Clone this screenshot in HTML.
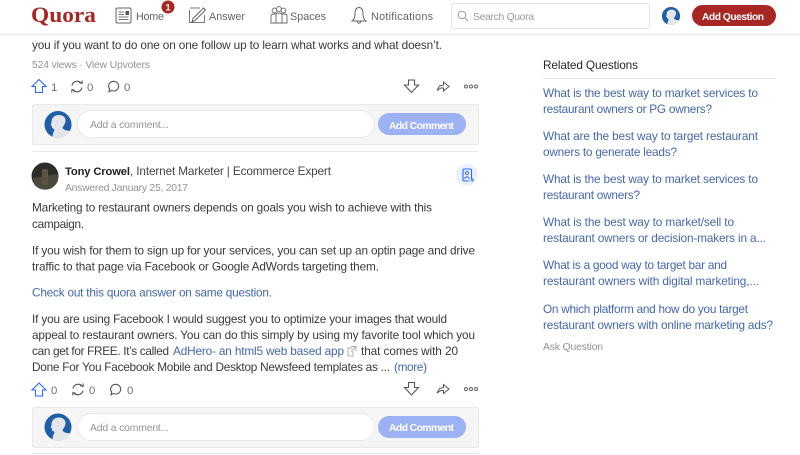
<!DOCTYPE html>
<html><head><meta charset="utf-8"><title>Quora</title>
<style>
html,body{margin:0;padding:0;background:#fff;width:800px;height:455px;overflow:hidden}
svg{display:block}
text{font-family:"Liberation Sans",sans-serif;font-size:11.8px;fill:#3a3a3a}
.l{fill:#4468ac}
.g{fill:#939393;font-size:10.4px}
.n{fill:#636466;font-size:10.8px}
.s{fill:#707070;font-size:11.4px}
</style></head><body>
<svg width="800" height="455" viewBox="0 0 800 455" xmlns="http://www.w3.org/2000/svg">
<defs>
<g id="av"><circle cx="0" cy="0" r="13.5" fill="#1f5ea8"/><path d="M-5.500 13 C-5.500 9 -4 7 -3.500 5 C-4.500 4 -6.500 4 -6 1.500 L-7.500 0.500 L-6.500 -1.500 C-7 -6 -4 -9.500 1 -9.500 C5.500 -9.500 8 -6.500 7.500 -3 C7 0 5 1.500 4.500 3.500 C5.500 5.500 9 6 12 6.500 C10 11 5 13.500 0 13.500 Z" fill="#e4e6ea"/></g>
<g id="re" fill="none" stroke="#555" stroke-width="1.100"><path d="M-5 -1 A5.200 5.200 0 0 1 4 -3.500 M5 1 A5.200 5.200 0 0 1 -4 3.500"/><path d="M2 -4 L5 -3 L5.300 -6 M-2 4 L-5 3 L-5.300 6"/></g>
<g id="co" fill="none" stroke="#555" stroke-width="1.100"><path d="M-2.500 4 A5 4.800 0 1 0 -4.300 2.600 L-5 5.200 Z"/></g>
<g id="dn" fill="none" stroke="#555" stroke-width="1.100"><path d="M-3 -6 L3 -6 L3 -1 L7 -1 L0 6.500 L-7 -1 L-3 -1 Z"/></g>
<g id="sh" fill="none" stroke="#555" stroke-width="1"><path d="M-6 4 L-3.500 -0.500 L0.500 -1.500 L0.500 -4.500 L6 0 L0.500 4.500 L0.500 1.500 L-2 1.500 Z"/></g>
<g id="mo" fill="none" stroke="#666" stroke-width="1"><circle cx="-5" cy="0" r="1.500"/><circle cx="0" cy="0" r="1.500"/><circle cx="5" cy="0" r="1.500"/></g>
<g id="box">
<rect x="0.500" y="0.500" width="446" height="40" rx="2" fill="#f5f5f5" stroke="#e8e8e8"/>
<rect x="45.500" y="6.500" width="297" height="27" rx="13.500" fill="#fff" stroke="#e8e8e8"/>
<rect x="346" y="9" width="88" height="22" rx="11" fill="#9db2f5"/>
</g>
</defs>

<!-- top fragment -->
<text x="32" y="49" textLength="410" lengthAdjust="spacing">you if you want to do one on one follow up to learn what works and what doesn’t.</text>
<text class="g" x="32" y="68" textLength="118" lengthAdjust="spacing">524 views · View Upvoters</text>

<!-- action row 1 -->
<path d="M39 79.500 L46 86.500 L42.500 86.500 L42.500 92.500 L35.500 92.500 L35.500 86.500 L32 86.500 Z" fill="none" stroke="#2e69ff" stroke-width="1.100"/>
<text class="s" x="51" y="91">1</text>
<use href="#re" x="77" y="86.500"/>
<text class="s" x="87" y="91">0</text>
<use href="#co" x="114" y="86.500"/>
<text class="s" x="124" y="91">0</text>
<use href="#dn" x="411.500" y="86"/>
<use href="#sh" x="443" y="86.500"/>
<use href="#mo" x="471" y="86.500"/>

<!-- comment box 1 -->
<use href="#box" x="32" y="104"/>
<use href="#av" x="58" y="124.500"/>
<text class="g" x="90" y="128" textLength="79" lengthAdjust="spacing">Add a comment...</text>
<text x="389" y="129" textLength="65" lengthAdjust="spacing" style="fill:#fff;font-weight:bold;font-size:10.400px">Add Comment</text>
<rect x="32" y="151" width="446" height="1" fill="#e8e8e8"/>

<!-- author -->
<circle cx="45" cy="176" r="13.500" fill="#2b2d28"/>
<path d="M33 178 L58 174 L58 180 A13.500 13.500 0 0 1 34 184 Z" fill="#4a4a3a"/>
<rect x="42" y="169" width="6" height="16" rx="2" fill="#5f5140"/>
<text x="65" y="175" textLength="65" lengthAdjust="spacing" style="font-weight:bold;fill:#222;font-size:11.200px">Tony Crowel</text>
<text x="130" y="175" textLength="201" lengthAdjust="spacing" style="fill:#444">, Internet Marketer | Ecommerce Expert</text>
<text class="g" x="65" y="191" textLength="123" lengthAdjust="spacing">Answered January 25, 2017</text>
<circle cx="467" cy="175" r="11" fill="#ebf0fe"/>
<path d="M471.500 179 V170.500 Q471.500 169 470 169 L464.500 169 Q463 169 463 170.500 L463 179.500 Q463 181 464.500 181 L469 181" fill="none" stroke="#2e69ff" stroke-width="1.100"/>
<circle cx="467" cy="173" r="1.600" fill="none" stroke="#2e69ff"/>
<path d="M464.500 179 Q467 174.500 469.500 179 M470.500 180 H474 M472.200 178.200 V181.700" fill="none" stroke="#2e69ff"/>

<!-- body -->
<text x="32" y="211.500" textLength="400" lengthAdjust="spacing">Marketing to restaurant owners depends on goals you wish to achieve with this</text>
<text x="32" y="228" textLength="52" lengthAdjust="spacing">campaign.</text>
<text x="32" y="254.500" textLength="443" lengthAdjust="spacing">If you wish for them to sign up for your services, you can set up an optin page and drive</text>
<text x="32" y="270.500" textLength="347" lengthAdjust="spacing">traffic to that page via Facebook or Google AdWords targeting them.</text>
<text class="l" x="32" y="296.500" textLength="240" lengthAdjust="spacing">Check out this quora answer on same question.</text>
<text x="32" y="323" textLength="415" lengthAdjust="spacing">If you are using Facebook I would suggest you to optimize your images that would</text>
<text x="32" y="339" textLength="443" lengthAdjust="spacing">appeal to restaurant owners. You can do this simply by using my favorite tool which you</text>
<text x="32" y="355" textLength="137" lengthAdjust="spacing">can get for FREE. It’s called</text>
<text class="l" x="173" y="355" textLength="171" lengthAdjust="spacing">AdHero- an html5 web based app</text>
<path d="M353 351 V356 H348 V348 H352 M351 346.500 H356 V351 M356 346.500 L351 351.500" fill="none" stroke="#999" stroke-width=".8"/>
<text x="361" y="355" textLength="97" lengthAdjust="spacing">that comes with 20</text>
<text x="32" y="371" textLength="358" lengthAdjust="spacing">Done For You Facebook Mobile and Desktop Newsfeed templates as ...</text>
<text class="l" x="394" y="371" textLength="33" lengthAdjust="spacing">(more)</text>

<!-- action row 2 -->
<path d="M39 383 L46 390 L42.500 390 L42.500 396 L35.500 396 L35.500 390 L32 390 Z" fill="none" stroke="#2e69ff" stroke-width="1.100"/>
<text class="s" x="51" y="394">0</text>
<use href="#re" x="78" y="389.500"/>
<text class="s" x="89" y="394">0</text>
<use href="#co" x="116" y="389.500"/>
<text class="s" x="127" y="394">0</text>
<use href="#dn" x="411.500" y="388.500"/>
<use href="#sh" x="443" y="389"/>
<use href="#mo" x="471" y="389"/>

<!-- comment box 2 -->
<use href="#box" x="32" y="407"/>
<use href="#av" x="58" y="427"/>
<text class="g" x="90" y="431" textLength="79" lengthAdjust="spacing">Add a comment...</text>
<text x="389" y="431" textLength="65" lengthAdjust="spacing" style="fill:#fff;font-weight:bold;font-size:10.400px">Add Comment</text>
<rect x="32" y="453" width="446" height="1" fill="#e8e8e8"/>

<!-- sidebar -->
<text x="543" y="69" textLength="95" lengthAdjust="spacing" style="fill:#282829">Related Questions</text>
<rect x="543" y="78" width="233" height="1" fill="#e6e6e6"/>
<text class="l" x="543" y="97" textLength="215" lengthAdjust="spacing">What is the best way to market services to</text>
<text class="l" x="543" y="113" textLength="169" lengthAdjust="spacing">restaurant owners or PG owners?</text>
<text class="l" x="543" y="140" textLength="215" lengthAdjust="spacing">What are the best way to target restaurant</text>
<text class="l" x="543" y="156" textLength="134" lengthAdjust="spacing">owners to generate leads?</text>
<text class="l" x="543" y="183" textLength="215" lengthAdjust="spacing">What is the best way to market services to</text>
<text class="l" x="543" y="199" textLength="97" lengthAdjust="spacing">restaurant owners?</text>
<text class="l" x="543" y="226" textLength="191" lengthAdjust="spacing">What is the best way to market/sell to</text>
<text class="l" x="543" y="242" textLength="223" lengthAdjust="spacing">restaurant owners or decision-makers in a...</text>
<text class="l" x="543" y="269" textLength="184" lengthAdjust="spacing">What is a good way to target bar and</text>
<text class="l" x="543" y="285" textLength="216" lengthAdjust="spacing">restaurant owners with digital marketing,...</text>
<text class="l" x="543" y="313" textLength="205" lengthAdjust="spacing">On which platform and how do you target</text>
<text class="l" x="543" y="329" textLength="230" lengthAdjust="spacing">restaurant owners with online marketing ads?</text>
<text class="g" x="543" y="350" textLength="60" lengthAdjust="spacing">Ask Question</text>

<!-- header -->
<rect x="0" y="0" width="800" height="33" fill="#fff"/>
<rect x="0" y="33" width="800" height="3" fill="#f4f4f4"/>
<text x="31" y="22" textLength="65" lengthAdjust="spacingAndGlyphs" style="font-family:'Liberation Serif',serif;font-weight:bold;font-size:22px;fill:#a82723">Quora</text>

<rect x="116" y="8" width="15" height="15" rx="1.500" fill="none" stroke="#666"/>
<path d="M118.500 12 H124 M118.500 14.500 H124 M118.500 17 H128.500 M118.500 19.500 H128.500" stroke="#777" fill="none"/>
<rect x="125.500" y="11" width="3.500" height="4" fill="#555"/>
<text class="n" x="136" y="20" textLength="28" lengthAdjust="spacing">Home</text>
<circle cx="168" cy="7" r="6.500" fill="#a82723"/>
<text x="168" y="10.500" text-anchor="middle" style="fill:#fff;font-size:9px;font-weight:bold">1</text>

<path d="M189.500 10 V22.500 H204.500 V15 M190 8 H200" fill="none" stroke="#777"/>
<path d="M192 22 L193 18.500 L203.500 8 L205.500 10 L195 20.500 Z" fill="#fff" stroke="#666"/>
<text class="n" x="209" y="20" textLength="36" lengthAdjust="spacing">Answer</text>

<g fill="none" stroke="#666" stroke-width=".9">
<circle cx="274.500" cy="10.500" r="2.400"/><circle cx="279" cy="9" r="2.400" fill="#fff"/><circle cx="283.500" cy="10.500" r="2.400"/>
<path d="M271 23 V16 Q271 14 274 14 H276 V23 Z M276 23 V14.500 Q276 13 279 13 Q282 13 282 14.500 V23 Z M282 23 V14 H284.500 Q287 14 287 16 V23 Z"/>
</g>
<text class="n" x="290" y="20" textLength="36" lengthAdjust="spacing">Spaces</text>

<path d="M352 21 Q355 19 355 14 Q355 7.500 359 7.500 Q363 7.500 363 14 Q363 19 366 21 Z M357 21.500 Q359 25 361 21.500" fill="none" stroke="#666"/>
<text class="n" x="371" y="20" textLength="62" lengthAdjust="spacing">Notifications</text>

<rect x="451.500" y="3.500" width="198" height="25" rx="2" fill="#fff" stroke="#e4e4e4"/>
<circle cx="462" cy="15" r="3.800" fill="none" stroke="#999"/><path d="M465 18 L468 21" stroke="#999"/>
<text class="g" x="473" y="20" textLength="61" lengthAdjust="spacing" style="fill:#999">Search Quora</text>

<g transform="translate(671,16) scale(.67)"><use href="#av"/></g>
<rect x="692" y="5" width="84" height="21" rx="10.500" fill="#a82723"/>
<text x="702" y="20" textLength="62" lengthAdjust="spacing" style="fill:#fff;font-weight:bold;font-size:10.200px">Add Question</text>
</svg>
</body></html>
